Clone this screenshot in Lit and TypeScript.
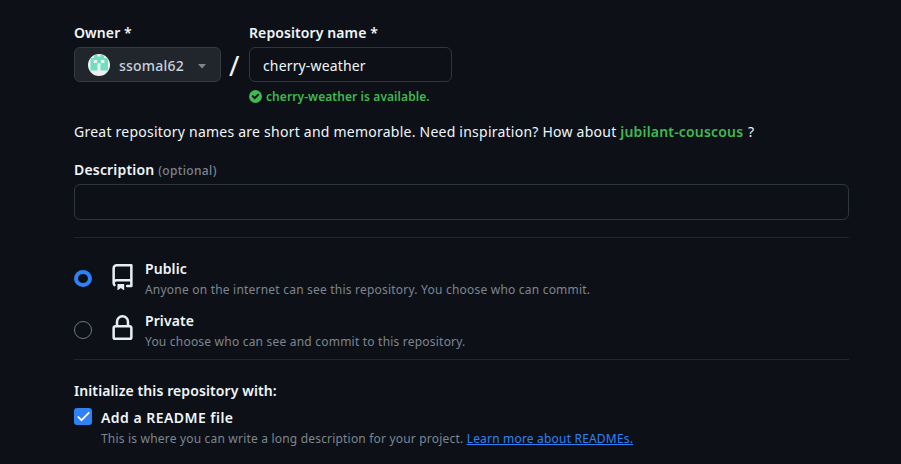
import { LitElement, html, css } from "lit";
import { customElement } from "lit/decorators.js";

@customElement("app-root")
class AppRoot extends LitElement {
  static styles = css`
    :host { display: block; box-sizing: border-box; width: 901px; height: 464px; overflow: hidden; padding: 23px 52px 0 74px; background: #0d1117; color: #f0f6fc; font: 14px/20px "Noto Sans", sans-serif; }
    * { box-sizing: border-box; }
    .top { display: flex; align-items: flex-start; }
    .label { font-weight: 600; height: 20px; white-space: nowrap; letter-spacing: 0.1px; }
    .owner { display: flex; align-items: center; width: 147px; height: 35px; margin-top: 4px; padding: 0 14px 0 13px; border: 1px solid #363b42; border-radius: 6px; background: #21262d; color: #c9d1d9; font-weight: 500; letter-spacing: 0.22px; }
    .owner span { margin-left: 9px; flex: 1; padding-top: 2px; }
    .caret { margin-top: 3px; }
    .slash { width: 28px; flex: none; margin-top: 24px; padding-left: 8px; font-size: 28px; line-height: 36px; }
    .name { width: 203px; height: 35px; margin-top: 4px; padding: 0 13px; line-height: 35px; border: 1px solid #30363d; border-radius: 6px; letter-spacing: 0.15px; }
    .ok { display: flex; align-items: center; gap: 4px; margin-top: 6px; height: 16px; font-size: 12px; font-weight: 600; color: #3fb950; white-space: nowrap; letter-spacing: 0.08px; }
    .ok span { padding-top: 1px; }
    .hint { margin-top: 18px; white-space: nowrap; letter-spacing: 0.235px; }
    .hint b { font-weight: 600; color: #3fb950; letter-spacing: 0.18px; margin-right: 1px; }
    .desc { margin-top: 18px; letter-spacing: 0.18px; }
    .desc small { font-size: 12px; font-weight: 500; color: #7d8590; letter-spacing: 0.35px; }
    .box { width: 775px; height: 36px; margin-top: 4px; border: 1px solid #30363d; border-radius: 6px; }
    .line { width: 775px; height: 1px; background: #21262d; }
    .first { margin-top: 17px; }
    .choice { display: flex; height: 52px; }
    .choices { padding-top: 21px; height: 121px; }
    .radio { width: 18px; height: 18px; margin-top: 10px; border: 1px solid #6e7681; border-radius: 50%; }
    .on { height: 17px; margin-top: 11px; border: 4px solid #2f81f7; }
    .icon { margin: 5px 9.4px 0 16.6px; }
    .lock { margin-top: 4px; }
    .sub { margin-top: 1px; font-size: 12px; color: #7d8590; white-space: nowrap; letter-spacing: 0.21px; }
    .init { margin-top: 21px; }
    .readme { display: flex; margin-top: 7px; gap: 9px; }
    .readme .label { letter-spacing: 0.46px; }
    .readme .sub { letter-spacing: 0.19px; }
    .check { width: 18px; height: 17px; background: #2f81f7; border-radius: 3px; }
    a { color: #2f81f7; text-decoration: underline; }
    svg { display: block; flex: none; }
  `;
  render() {
    return html`
      <div class="top">
        <div><div class="label">Owner *</div>
          <div class="owner">
            <svg width="22" height="22" viewBox="0 0 22 22"><defs><clipPath id="disc"><circle cx="11" cy="11" r="10.5"/></clipPath></defs><circle cx="11" cy="11" r="11" fill="#f0f0f0"/><path clip-path="url(#disc)" fill="#6ee0c0" d="M6 1h3.5v2h3V1H16v3h4v12.5h-7.5V9h-3v7.5H2.500V4H6z"/><path fill="#6ee0c0" d="M9.500 2.500h3V7h-3z"/><path fill="#f0f0f0" d="M5.700 6h3.300v3H5.700zM13 6h3.300v3H13z"/></svg>
            <span>ssomal62</span>
            <svg class="caret" width="8" height="5" viewBox="0 0 8 5"><path d="M0 0h8L4 4.5z" fill="#7d8590"/></svg>
          </div></div>
        <div class="slash">/</div>
        <div><div class="label">Repository name *</div>
          <div class="name">cherry-weather</div>
          <div class="ok"><svg width="13" height="13" viewBox="0 0 12 12"><path fill="#3fb950" fill-rule="evenodd" d="M6 0a6 6 0 1 1 0 12A6 6 0 0 1 6 0Zm-.705 8.737L9.63 4.403 8.392 3.166 5.295 6.263l-1.7-1.702L2.356 5.8Z"/></svg><span>cherry-weather is available.</span></div></div>
      </div>
      <div class="hint">Great repository names are short and memorable. Need inspiration? How about <b>jubilant-couscous</b> ?</div>
      <div class="label desc">Description <small>(optional)</small></div>
      <div class="box"></div>
      <div class="line first"></div>
      <div class="choices">
        <div class="choice"><div class="radio on"></div>
          <svg class="icon" width="27" height="26.500" viewBox="0 0 16 16" preserveAspectRatio="none"><path fill="#e6edf3" d="M2 2.500A2.500 2.500 0 0 1 4.500 0h8.750a.75.75 0 0 1 .75.75v12.500a.75.75 0 0 1-.75.75h-2.500a.75.75 0 0 1 0-1.500h1.750v-2h-8a1 1 0 0 0-.714 1.700.75.75 0 1 1-1.072 1.050A2.495 2.495 0 0 1 2 11.500Zm10.500-1h-8a1 1 0 0 0-1 1v6.708A2.486 2.486 0 0 1 4.500 9h8ZM5 12.250a.25.25 0 0 1 .25-.25h3.500a.25.25 0 0 1 .25.25v3.250a.25.25 0 0 1-.4.2l-1.450-1.087a.249.249 0 0 0-.3 0L5.400 15.700a.25.25 0 0 1-.4-.2Z"/></svg>
          <div><div class="label">Public</div><div class="sub">Anyone on the internet can see this repository. You choose who can commit.</div></div></div>
        <div class="choice"><div class="radio"></div>
          <svg class="icon lock" width="27" height="25.500" viewBox="0 0 16 16" preserveAspectRatio="none"><path fill="#e6edf3" d="M4 4a4 4 0 0 1 8 0v2h.25c.966 0 1.750.784 1.750 1.750v5.500A1.750 1.750 0 0 1 12.250 15h-8.500A1.750 1.750 0 0 1 2 13.250v-5.500C2 6.784 2.784 6 3.750 6H4Zm8.250 3.500h-8.500a.25.25 0 0 0-.25.25v5.500c0 .138.112.25.25.25h8.500a.25.25 0 0 0 .25-.25v-5.500a.25.25 0 0 0-.25-.25ZM10.500 6V4a2.500 2.500 0 1 0-5 0v2Z" transform="scale(1 1.050)"/></svg>
          <div><div class="label">Private</div><div class="sub">You choose who can see and commit to this repository.</div></div></div>
      </div>
      <div class="line"></div>
      <div class="label init">Initialize this repository with:</div>
      <div class="readme"><div class="check"><svg width="18" height="17" viewBox="0 0 18 17"><path d="M3.800 8.500l3.700 3.700L15.300 4.400" fill="none" stroke="#fff" stroke-width="1.700"/></svg></div>
        <div><div class="label">Add a README file</div><div class="sub">This is where you can write a long description for your project. <a>Learn more about READMEs.</a></div></div></div>
    `;
  }
}
